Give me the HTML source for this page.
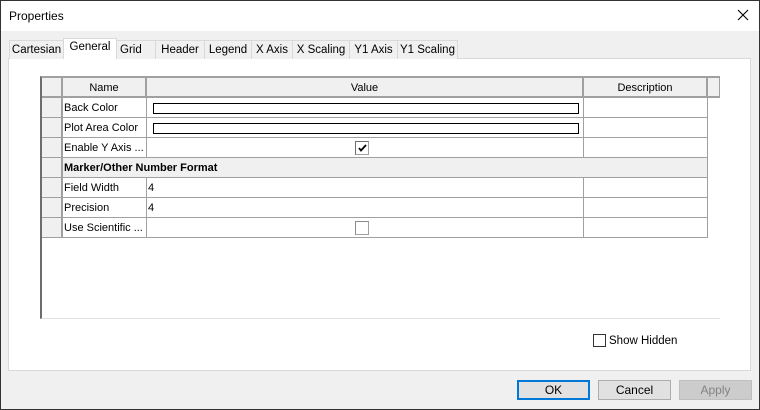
<!DOCTYPE html>
<html><head><style>
*{margin:0;padding:0;box-sizing:border-box}
body{width:760px;height:410px;background:#f0f0f0;font-family:"Liberation Sans",sans-serif;font-size:11px;color:#000;position:relative;overflow:hidden}
.a{position:absolute}
.win{left:0;top:0;width:760px;height:410px;border:1px solid #333;}
.title{left:1px;top:1px;width:758px;height:30px;background:#fff}
.tab{top:40px;height:19px;border:1px solid #d9d9d9;border-bottom:none;background:#f0f0f0;text-align:center;line-height:19px;font-size:11.5px}
.sel{top:38px;height:21px;background:#fff;z-index:2;border-color:#d9d9d9}
.panel{left:8px;top:58px;width:743px;height:313px;background:#fff;border:1px solid #d9d9d9}
.grid{left:40px;top:76px;width:680px;height:243px;background:#fff;border-left:2px solid #6d6d6d;border-top:2px solid #a0a0a0;border-bottom:1px solid #e0e0e0}
.c{position:absolute;border-right:1px solid #a0a0a0;border-bottom:1px solid #a0a0a0;height:20px;line-height:21px;padding-left:1px;white-space:nowrap;overflow:hidden}
.h{background:#f0f0f0;text-align:center;padding-left:0;border-right:2px solid #a0a0a0;border-bottom:2px solid #a0a0a0}
.rh{background:#f0f0f0;border-right:2px solid #a0a0a0;border-bottom:1px solid #a0a0a0}
.btn{top:380px;width:73px;height:20px;border:1px solid #adadad;background:#e1e1e1;text-align:center;line-height:18px;font-size:12px}
.cb{width:14px;height:14px;border:1px solid #a0a0a0;border-top-color:#6d6d6d;border-left-color:#6d6d6d;background:#fff}
</style></head><body>
<div class="a win"></div>
<div class="a title"></div>
<div class="a" style="left:9px;top:9px;font-size:12px">Properties</div>
<svg class="a" style="left:737px;top:9px" width="12" height="12"><path d="M1 1L11 11M11 1L1 11" stroke="#000" stroke-width="1.1"/></svg>
<div class="a panel"></div>
<div class="a tab" style="left:9px;width:55px">Cartesian</div>
<div class="a tab sel" style="left:63px;width:54px;line-height:17px">General</div>
<div class="a tab" style="left:116px;width:40px;text-align:left;padding-left:3px">Grid</div>
<div class="a tab" style="left:155px;width:50px">Header</div>
<div class="a tab" style="left:204px;width:48px">Legend</div>
<div class="a tab" style="left:251px;width:42px">X Axis</div>
<div class="a tab" style="left:292px;width:58px">X Scaling</div>
<div class="a tab" style="left:349px;width:49px">Y1 Axis</div>
<div class="a tab" style="left:397px;width:61px">Y1 Scaling</div>
<div class="a grid">
 <div class="c h" style="left:0;top:0;width:21px"></div>
 <div class="c h" style="left:21px;top:0;width:84px">Name</div>
 <div class="c h" style="left:105px;top:0;width:437px">Value</div>
 <div class="c h" style="left:542px;top:0;width:124px">Description</div>
 <div class="c h" style="left:666px;top:0;width:12px;border-right:1px solid #a0a0a0"></div>
 <div class="c rh" style="left:0;top:20px;width:21px"></div><div class="c" style="left:21px;top:20px;width:84px">Back Color</div><div class="c" style="left:105px;top:20px;width:437px"><div class="a" style="left:6px;top:5px;width:426px;height:11px;border:1px solid #000"></div></div><div class="c" style="left:542px;top:20px;width:124px"></div>
 <div class="c rh" style="left:0;top:40px;width:21px"></div><div class="c" style="left:21px;top:40px;width:84px">Plot Area Color</div><div class="c" style="left:105px;top:40px;width:437px"><div class="a" style="left:6px;top:5px;width:426px;height:11px;border:1px solid #000"></div></div><div class="c" style="left:542px;top:40px;width:124px"></div>
 <div class="c rh" style="left:0;top:60px;width:21px"></div><div class="c" style="left:21px;top:60px;width:84px">Enable Y Axis ...</div><div class="c" style="left:105px;top:60px;width:437px"><div class="a cb" style="left:208px;top:3px"><svg class="a" style="left:1px;top:1px" width="11" height="10"><path d="M2 5L4 7.5L9 2" stroke="#000" stroke-width="1.8" fill="none"/></svg></div></div><div class="c" style="left:542px;top:60px;width:124px"></div>
 <div class="c rh" style="left:0;top:80px;width:21px"></div><div class="c" style="left:21px;top:80px;width:645px;background:#f0f0f0;font-weight:bold">Marker/Other Number Format</div>
 <div class="c rh" style="left:0;top:100px;width:21px"></div><div class="c" style="left:21px;top:100px;width:84px">Field Width</div><div class="c" style="left:105px;top:100px;width:437px">4</div><div class="c" style="left:542px;top:100px;width:124px"></div>
 <div class="c rh" style="left:0;top:120px;width:21px"></div><div class="c" style="left:21px;top:120px;width:84px">Precision</div><div class="c" style="left:105px;top:120px;width:437px">4</div><div class="c" style="left:542px;top:120px;width:124px"></div>
 <div class="c rh" style="left:0;top:140px;width:21px"></div><div class="c" style="left:21px;top:140px;width:84px">Use Scientific ...</div><div class="c" style="left:105px;top:140px;width:437px"><div class="a" style="left:208px;top:3px;width:14px;height:14px;border:1px solid #a0a0a0;border-top-color:#8a8a8a;border-left-color:#8a8a8a"></div></div><div class="c" style="left:542px;top:140px;width:124px"></div>
</div>
<div class="a" style="left:593px;top:334px;width:13px;height:13px;border:1px solid #333;background:#fff"></div>
<div class="a" style="left:609px;top:335px;font-size:11.5px">Show Hidden</div>
<div class="a btn" style="left:517px;border:2px solid #0078d7;line-height:16px">OK</div>
<div class="a btn" style="left:598px">Cancel</div>
<div class="a btn" style="left:679px;background:#ccc;border-color:#bfbfbf;color:#838383">Apply</div>
</body></html>
